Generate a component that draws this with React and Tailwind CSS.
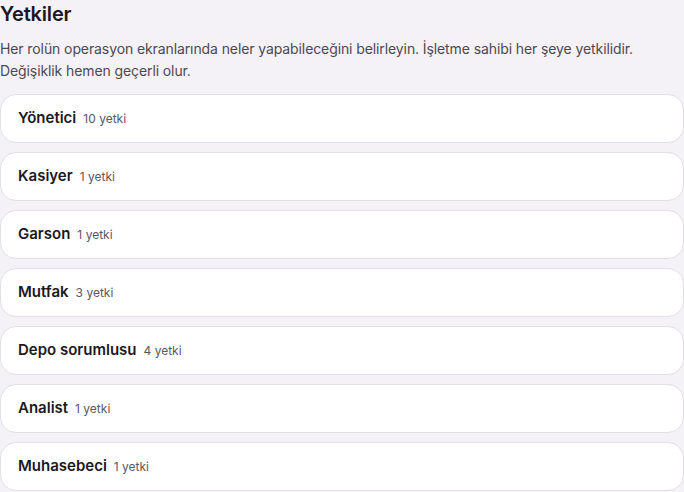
const ROLES = [
  { name: 'Yönetici', count: 10 },
  { name: 'Kasiyer', count: 1 },
  { name: 'Garson', count: 1 },
  { name: 'Mutfak', count: 3 },
  { name: 'Depo sorumlusu', count: 4 },
  { name: 'Analist', count: 1 },
  { name: 'Muhasebeci', count: 1 },
];

export default function App() {
  return (
    <div className="min-h-screen bg-[#f4f2f6] font-['Inter',sans-serif] text-[#1c1822]">
      <h1 className="text-[20px] leading-[28px] font-semibold tracking-[-0.2px]">Yetkiler</h1>
      <p className="mt-[10px] text-[14px] leading-[22px] text-[#4d4853] tracking-[-0.1px]">
        Her rolün operasyon ekranlarında neler yapabileceğini belirleyin. İşletme sahibi her şeye yetkilidir.
        Değişiklik hemen geçerli olur.
      </p>
      <div className="mt-[12px] flex flex-col gap-[9px]">
        {ROLES.map(r => (
          <div
            key={r.name}
            className="h-[49px] rounded-[16px] border border-[#e2dfe5] bg-white px-[17px] flex items-center gap-[7px]"
          >
            <span className="text-[15px] font-semibold">{r.name}</span>
            <span className="text-[12px] text-[#5c5762]">{r.count} yetki</span>
          </div>
        ))}
      </div>
    </div>
  );
}
